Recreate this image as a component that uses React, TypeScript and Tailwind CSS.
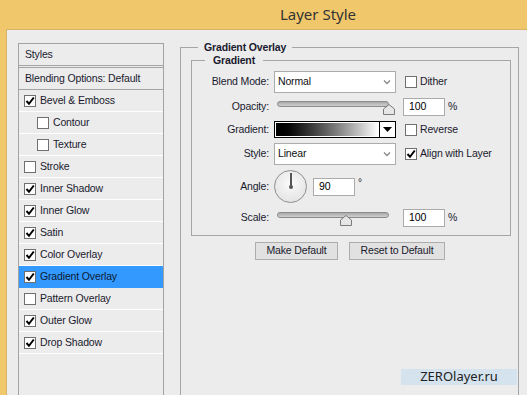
import React from 'react';

const font = { fontFamily: '"Liberation Sans", Arial, sans-serif' };

function Check({ checked }: { checked?: boolean }) {
  return (
    <span className="w-[12px] h-[12px] shrink-0 border border-[#707070] bg-white flex items-center justify-center">
      {checked && (
        <svg width="10" height="10" viewBox="0 0 10 10">
          <path d="M1.5 5 L4 7.8 L8.8 1.5" fill="none" stroke="#000" strokeWidth="2" />
        </svg>
      )}
    </span>
  );
}

const styles: { label: string; checked: boolean; sub?: boolean; active?: boolean }[] = [
  { label: 'Bevel & Emboss', checked: true },
  { label: 'Contour', checked: false, sub: true },
  { label: 'Texture', checked: false, sub: true },
  { label: 'Stroke', checked: false },
  { label: 'Inner Shadow', checked: true },
  { label: 'Inner Glow', checked: true },
  { label: 'Satin', checked: true },
  { label: 'Color Overlay', checked: true },
  { label: 'Gradient Overlay', checked: true, active: true },
  { label: 'Pattern Overlay', checked: false },
  { label: 'Outer Glow', checked: true },
  { label: 'Drop Shadow', checked: true },
];

function Chevron() {
  return (
    <svg width="8" height="6" viewBox="0 0 8 6" className="ml-auto mr-[4px]">
      <path d="M1 1.5 L4 4.5 L7 1.5" fill="none" stroke="#8a8a8a" strokeWidth="1.4" />
    </svg>
  );
}

function Select({ value }: { value: string }) {
  return (
    <div className="ml-[5px] w-[122px] h-[22px] border border-[#ababab] bg-white flex items-center pl-[3px] text-[#111]">
      <span>{value}</span>
      <Chevron />
    </div>
  );
}

function Slider({ thumb }: { thumb: number }) {
  return (
    <div className="ml-[5px] w-[122px] h-[19px] relative">
      <div className="absolute left-[3px] top-[4px] w-[112px] h-[6px] rounded-full border border-[#8c8c8c] bg-gradient-to-b from-[#a9a9a9] to-[#d0d0d0]" />
      <svg width="12" height="11" viewBox="0 0 12 11" className="absolute top-[7px]" style={{ left: thumb }}>
        <path d="M0.5 10.5 V5 L6 0.5 L11.5 5 V10.5 Z" fill="#e6e6e6" stroke="#7a7a7a" />
      </svg>
    </div>
  );
}

function NumBox({ value, className }: { value: string; className?: string }) {
  return (
    <div className={`w-[42px] h-[18px] border border-[#ababab] bg-white flex items-center pl-[5px] text-black ${className ?? ''}`}>
      {value}
    </div>
  );
}

function Label({ children }: { children: React.ReactNode }) {
  return <span className="w-[77px] shrink-0 text-right text-[#1a1a2e]">{children}</span>;
}

export default function App() {
  return (
    <div
      className="w-[527px] h-[395px] overflow-hidden bg-[#F0C76B] flex flex-col relative text-[10.5px] tracking-[-0.15px]"
      style={font}
    >
      <div
        className="h-[29px] shrink-0 flex items-center justify-center pl-[109px] text-[15px] tracking-normal text-[#333]"
        style={{ fontFamily: '"Noto Sans", "Open Sans", sans-serif' }}
      >
        Layer Style
      </div>

      <div className="flex-1 ml-[6px] border-l border-t border-[#D6B366] bg-[#ECECEC] flex items-start pl-[11px] pt-[13px]">
        {/* styles list */}
        <div className="w-[146px] h-[400px] shrink-0 border border-[#a3a3a3] flex flex-col text-[#1a1a2e]">
          <div className="h-[21px] flex items-center pl-[6px]">Styles</div>
          <div className="h-[3px] border-t border-b border-[#a3a3a3]" />
          <div className="h-[22px] flex items-center pl-[6px] border-b border-[#a3a3a3]">
            Blending Options: Default
          </div>
          {styles.map((s) => (
            <div
              key={s.label}
              className={`h-[22px] flex items-center gap-[4px] border-b ${
                s.active ? 'bg-[#3399FF] border-[#3399FF] text-[#0d1a33]' : 'border-white'
              } ${s.sub ? 'pl-[18px]' : 'pl-[5px]'}`}
            >
              <Check checked={s.checked} />
              <span>{s.label}</span>
            </div>
          ))}
        </div>

        {/* settings */}
        <fieldset className="ml-[16px] -mt-[2px] w-[339px] h-[400px] border border-[#a5a5a5] pl-[10px] pr-[7px]">
          <legend className="ml-[7px] px-[6px] leading-[13px] font-bold text-[#1a1a2e]">Gradient Overlay</legend>

          <fieldset className="w-[320px] border border-[#a5a5a5] pb-[8px]">
            <legend className="ml-[13px] px-[8px] leading-[13px] font-bold text-[#1a1a2e]">Gradient</legend>

            <div className="mt-[4px] h-[22px] flex items-center">
              <Label>Blend Mode:</Label>
              <Select value="Normal" />
              <span className="ml-[9px]"><Check /></span>
              <span className="ml-[3px] text-[#1a1a2e]">Dither</span>
            </div>

            <div className="mt-[4px] h-[19px] flex items-center">
              <Label>Opacity:</Label>
              <Slider thumb={109} />
              <NumBox value="100" className="ml-[7px]" />
              <span className="ml-[3px] text-[#1a1a2e]">%</span>
            </div>

            <div className="mt-[5px] h-[17px] flex items-center">
              <Label>Gradient:</Label>
              <div className="ml-[5px] w-[122px] h-[17px] border border-black flex bg-white">
                <div className="flex-1 m-[1px] bg-gradient-to-r from-black to-white" />
                <div className="w-[16px] border-l border-black flex items-center justify-center">
                  <svg width="9" height="5" viewBox="0 0 9 5">
                    <path d="M0 0 H9 L4.5 5 Z" fill="#000" />
                  </svg>
                </div>
              </div>
              <span className="ml-[9px]"><Check /></span>
              <span className="ml-[3px] text-[#1a1a2e]">Reverse</span>
            </div>

            <div className="mt-[5px] h-[22px] flex items-center">
              <Label>Style:</Label>
              <Select value="Linear" />
              <span className="ml-[9px]"><Check checked /></span>
              <span className="ml-[3px] text-[#1a1a2e]">Align with Layer</span>
            </div>

            <div className="mt-[4px] h-[35px] flex items-center">
              <Label>Angle:</Label>
              <div className="ml-[5px] w-[33px] h-[33px] rounded-full border border-[#8e8e8e] bg-[radial-gradient(circle_at_50%_40%,#fafafa,#dedede)] relative">
                <div className="absolute left-[15px] top-[2px] w-[1.5px] h-[14px] bg-[#555]" />
                <div className="absolute left-[14px] top-[14px] w-[4px] h-[4px] rounded-full bg-[#555]" />
              </div>
              <NumBox value="90" className="ml-[6px]" />
              <span className="ml-[3px] -mt-[8px] text-[10px] text-[#1a1a2e]">°</span>
            </div>

            <div className="mt-[4px] h-[19px] flex items-center">
              <Label>Scale:</Label>
              <Slider thumb={66} />
              <NumBox value="100" className="ml-[7px]" />
              <span className="ml-[3px] text-[#1a1a2e]">%</span>
            </div>
          </fieldset>

          <div className="mt-[6px] flex gap-[11px] pl-[64px] text-[#1a1a2e]">
            <div className="w-[83px] h-[18px] border border-[#adadad] bg-[#e1e1e1] flex items-center justify-center">
              Make Default
            </div>
            <div className="w-[96px] h-[18px] border border-[#adadad] bg-[#e1e1e1] flex items-center justify-center">
              Reset to Default
            </div>
          </div>
        </fieldset>
      </div>

      <div
        className="absolute left-[401px] top-[369px] w-[116px] h-[16px] bg-[#D5E3EE] flex items-center justify-center text-[13px] tracking-normal text-[#222]"
        style={{ fontFamily: '"Noto Sans", "Open Sans", sans-serif' }}
      >
        ZEROlayer.ru
      </div>
    </div>
  );
}
